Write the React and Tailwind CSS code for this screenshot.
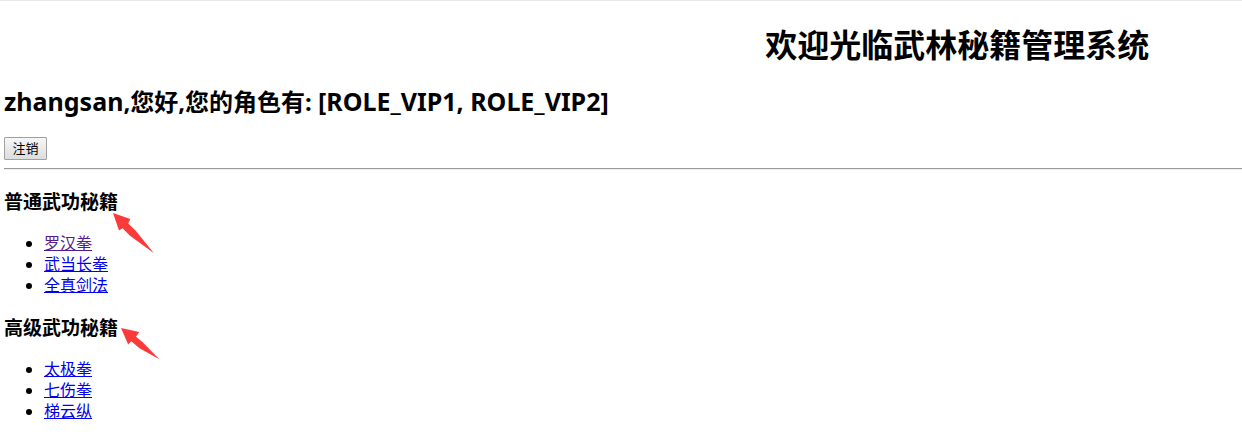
const sections = [
  {
    title: "普通武功秘籍",
    links: [
      { label: "罗汉拳", visited: true },
      { label: "武当长拳" },
      { label: "全真剑法" },
    ],
    arrow: (
      <svg className="absolute left-[109px] top-[23px] h-[41px] w-[42px]" viewBox="0 0 42 41" aria-hidden="true">
        <path d="M0 0 L17.3 6 L15.2 10.5 L22.5 17.5 L41 40.3 L17 22.8 L9.6 15.2 L6 17.5 Z" fill="#fd3a3a" />
      </svg>
    ),
  },
  {
    title: "高级武功秘籍",
    links: [{ label: "太极拳" }, { label: "七伤拳" }, { label: "梯云纵" }],
    arrow: (
      <svg className="absolute left-[117px] top-[12px] h-[32px] w-[39px]" viewBox="0 0 39 32" aria-hidden="true">
        <path d="M0 0 L18.2 4 L15 8.7 L21.7 14.3 L38.3 31.3 L18.5 20.2 L10.3 13.3 L7.2 16.5 Z" fill="#fd3a3a" />
      </svg>
    ),
  },
];

const user = { name: "zhangsan", roles: ["ROLE_VIP1", "ROLE_VIP2"] };

function Section({ title, links, arrow }) {
  return (
    <section className="mt-5">
      <h3 className="relative text-[19px] leading-[25px] font-bold">
        {title}
        {arrow}
      </h3>
      <ul className="mt-[18px] list-disc pl-10 text-base leading-[21px]">
        {links.map((link) => (
          <li key={link.label}>
            <a href="#" className={link.visited ? "text-[#551a8b] underline" : "text-[#0000ee] underline"}>
              {link.label}
            </a>
          </li>
        ))}
      </ul>
    </section>
  );
}

export default function App() {
  return (
    <main className="overflow-hidden border-t border-[#e8e8e8] bg-white pb-6 pl-1 font-['Noto_Sans','Noto_Sans_CJK_SC',sans-serif] text-black">
      <h1 className="mt-[23px] pl-[54%] text-center text-[32px] leading-[42px] font-bold whitespace-nowrap">
        欢迎光临武林秘籍管理系统
      </h1>
      <h2 className="mt-[19px] text-2xl leading-8 font-bold">
        <span className="text-[25px]">{user.name}</span>,您好,您的角色有:{" "}
        <span className="text-[25px]">[{user.roles.join(", ")}]</span>
      </h2>
      <form className="mt-[19px] flex" onSubmit={(e) => e.preventDefault()}>
        <button
          type="submit"
          className="h-[23px] w-[43px] rounded-[1px] border border-[#a0a0a0] bg-linear-to-b from-[#f6f6f6] to-[#dddddd] text-[13px] leading-[21px]"
        >
          注销
        </button>
      </form>
      <hr className="mt-2 h-[2px] border-t border-b border-t-[#9a9a9a] border-b-[#eeeeee]" />
      {sections.map((section) => (
        <Section key={section.title} {...section} />
      ))}
    </main>
  );
}
